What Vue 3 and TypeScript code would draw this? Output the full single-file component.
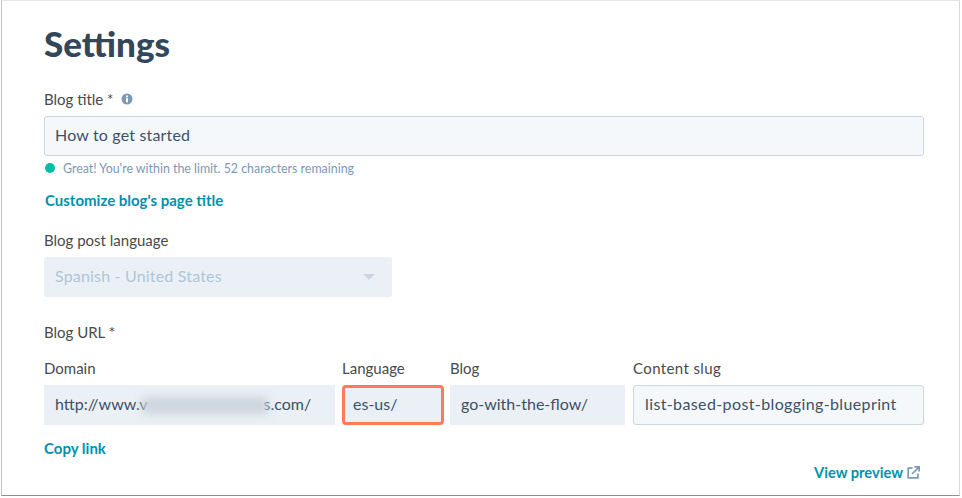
<script setup lang="ts">
const parts: { label: string; value: string; cls: string }[] = [
  { label: 'Language', value: 'es-us/', cls: 'lang' },
  { label: 'Blog', value: 'go-with-the-flow/', cls: 'blog' },
  { label: 'Content slug', value: 'list-based-post-blogging-blueprint', cls: 'slug' },
]
</script>

<template>
  <main class="card">
    <h1>Settings</h1>

    <div class="label-row title-label">
      <span>Blog title *</span>
      <svg class="info" viewBox="0 0 12 12" width="12" height="12" aria-hidden="true">
        <circle cx="6" cy="6" r="5.5" fill="#7c98b6" />
        <rect x="5" y="5" width="2" height="4.4" fill="#fff" />
        <rect x="5" y="2.5" width="2" height="1.7" fill="#fff" />
      </svg>
    </div>
    <div class="input editable wide">How to get started</div>
    <div class="hint"><i class="dot"></i>Great! You're within the limit. 52 characters remaining</div>
    <a class="link custom">Customize blog's page title</a>

    <div class="label-row lang-label"><span>Blog post language</span></div>
    <div class="input disabled select">
      <span>Spanish - United States</span>
      <i class="caret"></i>
    </div>

    <div class="label-row url-label"><span>Blog URL *</span></div>
    <div class="url-row">
      <div class="col domain">
        <label>Domain</label>
        <div class="input disabled dark">http://www.v<span class="blur"></span>s.com/</div>
      </div>
      <div v-for="p in parts" :key="p.label" class="col" :class="p.cls">
        <label>{{ p.label }}</label>
        <div class="input" :class="p.cls === 'slug' ? 'editable' : 'disabled dark'">{{ p.value }}</div>
      </div>
    </div>

    <a class="link copy">Copy link</a>
    <div class="preview">
      <a class="link">View preview</a>
      <svg viewBox="0 0 14 14" width="13" height="13" fill="none" stroke="#7c98b6" stroke-width="1.8" aria-hidden="true">
        <path d="M6 2.2H1.3v10.5h10.5V8" />
        <path d="M5.4 8.6 12.6 1.4M8 .9h5.1V6" />
      </svg>
    </div>
  </main>
</template>

<style scoped>
.card {
  box-sizing: border-box;
  width: 959px;
  height: 496px;
  margin-left: 1px;
  padding: 0 35px 0 42px;
  background: #fff;
  border-left: 1px solid #c4c4c4;
  border-right: 1px solid #d8d8d8;
  border-top: 1px solid #e6e6e6;
  border-bottom: 1px solid #8f8f8f;
  font-family: Lato, "Open Sans", sans-serif;
  color: #3d5166;
  overflow: hidden;
}
h1 {
  margin: 22px 0 0;
  font-size: 35px;
  line-height: 40px;
  font-weight: 900;
  color: #33475b;
}
.label-row {
  display: flex;
  align-items: center;
  gap: 7px;
  height: 20px;
  font-size: 15px;
  color: #4a4a4a;
}
.title-label { margin-top: 26px; }
.lang-label { margin-top: 20px; }
.url-label { margin-top: 25px; }
.input {
  box-sizing: border-box;
  height: 40px;
  display: flex;
  align-items: center;
  padding: 0 11px 4px;
  border-radius: 3px;
  font-size: 16px;
  white-space: nowrap;
  color: #3d5166;
}
.wide { margin-top: 7px; padding-left: 10px; letter-spacing: 0.17px; }
.editable {
  background: #f5f8fa;
  border: 1px solid #cbd6e2;
}
.disabled {
  background: #eaf0f6;
  color: #b0c5d8;
}
.disabled.dark { color: #3d5166; border-radius: 0; }
.hint {
  display: flex;
  align-items: center;
  height: 16px;
  margin-top: 4px;
  font-size: 12.4px;
  color: #7c98b6;
}
.dot {
  width: 10px;
  height: 10px;
  border-radius: 50%;
  background: #00bda5;
  margin: 0 8px 0 1px;
}
.link {
  display: block;
  font-size: 15px;
  font-weight: 700;
  line-height: 20px;
  color: #0091ae;
}
.custom { margin-top: 14px; margin-left: 1px; }
.select {
  width: 348px;
  margin-top: 7px;
  justify-content: space-between;
  padding-right: 17px;
  letter-spacing: 0.18px;
}
.caret {
  width: 0;
  height: 0;
  border-left: 6px solid transparent;
  border-right: 6px solid transparent;
  border-top: 6px solid #cbd6e2;
  margin-top: 4px;
}
.url-row {
  display: flex;
  margin-top: 16px;
}
.col label {
  display: block;
  height: 20px;
  line-height: 20px;
  margin-bottom: 7px;
  font-size: 15px;
  color: #4a4a4a;
}
.domain { width: 291px; margin-right: 7px; }
.lang { width: 102px; margin-right: 6px; }
.blog { width: 175px; margin-right: 8px; }
.slug { width: 291px; letter-spacing: 0.38px; }
.lang .input {
  background: #eaf0f6;
  border: 3px solid #ff7a59;
  border-radius: 4px;
  padding: 0 8px 4px;
}
.blur {
  display: inline-block;
  width: 126px;
  height: 17px;
  margin: 4px -5px 0;
  background: #ccd4dd;
  filter: blur(5px);
}
.copy { margin-top: 13px; }
.preview {
  display: flex;
  justify-content: flex-end;
  align-items: center;
  gap: 4px;
  height: 20px;
  margin-top: 4px;
  margin-right: 4px;
}
.preview .link { font-size: 14.7px; }
</style>
